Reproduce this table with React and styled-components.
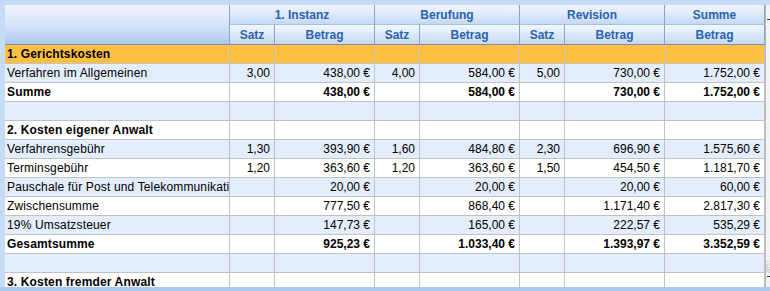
import React from "react";
import styled, { createGlobalStyle, css } from "styled-components";

const Global = createGlobalStyle`
  html, body { margin: 0; padding: 0; }
  body {
    background: #c6dbf6;
    font-family: "Liberation Sans", Arial, sans-serif;
    font-size: 12px;
    width: 770px;
    height: 291px;
    overflow: hidden;
  }
`;

const Frame = styled.div`
  display: flex;
  flex-direction: column;
  width: 770px;
  height: 291px;
  background: #c6dbf6;
`;

const TitleStrip = styled.div`
  height: 5px;
  overflow: hidden;
  padding-left: 5px;
`;

const TitleText = styled.div`
  margin-top: -10px;
  line-height: 12px;
  font-weight: bold;
  color: #2a62ad;
`;

const Body = styled.div`
  display: flex;
  padding-left: 5px;
  height: 282px;
`;

const Grid = styled.div`
  display: grid;
  grid-template-columns: 225px 45px 100px 45px 100px 45px 100px 100px;
  grid-template-rows: 20px 20px repeat(13, 19px);
  width: 760px;
  height: 282px;
  overflow: hidden;
  background: #fff;
`;

const HeadCell = styled.div`
  box-sizing: border-box;
  display: flex;
  align-items: center;
  justify-content: center;
  font-weight: bold;
  color: #2b63ae;
  background: linear-gradient(#f1f6fe, #dbe8fb 55%, #c3d8f6);
  border-right: 1px solid #8fa2bf;
  border-bottom: 1px solid ${(p) => (p.$bottom ? "#7b8ead" : "#a9bedc")};
  grid-column: ${(p) => p.$col || "auto"};
  grid-row: ${(p) => p.$row || "auto"};
  ${(p) =>
    p.$corner &&
    css`
      background: linear-gradient(#f0f5fe, #d6e5fa 50%, #abc9f1);
      border-bottom-color: #7b8ead;
    `}
`;

const Cell = styled.div`
  box-sizing: border-box;
  height: 19px;
  line-height: 18px;
  padding: 0 ${(p) => (p.$label ? "0 0 2px" : "4px 0 0")};
  text-align: ${(p) => (p.$label ? "left" : "right")};
  letter-spacing: ${(p) => (p.$label ? "0.15px" : "0")};
  white-space: nowrap;
  overflow: hidden;
  color: #000;
  font-weight: ${(p) => (p.$bold ? "bold" : "normal")};
  background: ${(p) => p.$bg};
  border-right: 1px solid #c2c2c2;
  border-bottom: 1px solid #c2c2c2;
`;

const Scroll = styled.div`
  width: 5px;
  height: 282px;
  box-sizing: border-box;
  background: #f3f3f3;
  border-left: 1px solid #b8b8b8;
  display: flex;
  flex-direction: column;
  padding-top: 14px;
`;

const Dash = styled.div`
  height: 1px;
  background: #333;
  margin-left: 1px;
`;

const Hatch = styled.div`
  margin-top: auto;
  height: 12px;
  background: repeating-linear-gradient(45deg, #cfcfcf 0 1px, #f3f3f3 1px 2px);
`;

const Gap = styled.div`
  height: 3px;
`;

const BottomSpace = styled.div`
  height: 10px;
`;

const Footer = styled.div`
  height: 4px;
  background: #a9c9f0;
`;

const rows = [
  { label: "1. Gerichtskosten", bold: true, orange: true, v: [] },
  { label: "Verfahren im Allgemeinen", v: ["3,00", "438,00 €", "4,00", "584,00 €", "5,00", "730,00 €", "1.752,00 €"] },
  { label: "Summe", bold: true, v: ["", "438,00 €", "", "584,00 €", "", "730,00 €", "1.752,00 €"] },
  { label: "", v: [] },
  { label: "2. Kosten eigener Anwalt", bold: true, v: [] },
  { label: "Verfahrensgebühr", v: ["1,30", "393,90 €", "1,60", "484,80 €", "2,30", "696,90 €", "1.575,60 €"] },
  { label: "Terminsgebühr", v: ["1,20", "363,60 €", "1,20", "363,60 €", "1,50", "454,50 €", "1.181,70 €"] },
  { label: "Pauschale für Post und Telekommunikationsdienstleistungen", v: ["", "20,00 €", "", "20,00 €", "", "20,00 €", "60,00 €"] },
  { label: "Zwischensumme", v: ["", "777,50 €", "", "868,40 €", "", "1.171,40 €", "2.817,30 €"] },
  { label: "19% Umsatzsteuer", v: ["", "147,73 €", "", "165,00 €", "", "222,57 €", "535,29 €"] },
  { label: "Gesamtsumme", bold: true, v: ["", "925,23 €", "", "1.033,40 €", "", "1.393,97 €", "3.352,59 €"] },
  { label: "", v: [] },
  { label: "3. Kosten fremder Anwalt", bold: true, v: [] },
];

export default function App() {
  return (
    <Frame>
      <Global />
      <TitleStrip>
        <TitleText>Prozesskosten</TitleText>
      </TitleStrip>
      <Body>
        <Grid>
          <HeadCell $corner $row="1 / span 2" $col="1" />
          <HeadCell $col="2 / span 2">1. Instanz</HeadCell>
          <HeadCell $col="4 / span 2">Berufung</HeadCell>
          <HeadCell $col="6 / span 2">Revision</HeadCell>
          <HeadCell $col="8">Summe</HeadCell>
          <HeadCell $bottom>Satz</HeadCell>
          <HeadCell $bottom>Betrag</HeadCell>
          <HeadCell $bottom>Satz</HeadCell>
          <HeadCell $bottom>Betrag</HeadCell>
          <HeadCell $bottom>Satz</HeadCell>
          <HeadCell $bottom>Betrag</HeadCell>
          <HeadCell $bottom>Betrag</HeadCell>
          {rows.map((r, i) => {
            const bg = r.orange ? "#ffbf40" : i % 2 === 1 ? "#e4edfc" : "#ffffff";
            return (
              <React.Fragment key={i}>
                <Cell $label $bold={r.bold} $bg={bg}>{r.label}</Cell>
                {Array.from({ length: 7 }).map((_, j) => (
                  <Cell key={j} $bold={r.bold} $bg={bg}>{r.v[j] || ""}</Cell>
                ))}
              </React.Fragment>
            );
          })}
        </Grid>
        <Scroll>
          <Dash />
          <Hatch />
          <Gap />
          <Dash />
          <BottomSpace />
        </Scroll>
      </Body>
      <Footer />
    </Frame>
  );
}
